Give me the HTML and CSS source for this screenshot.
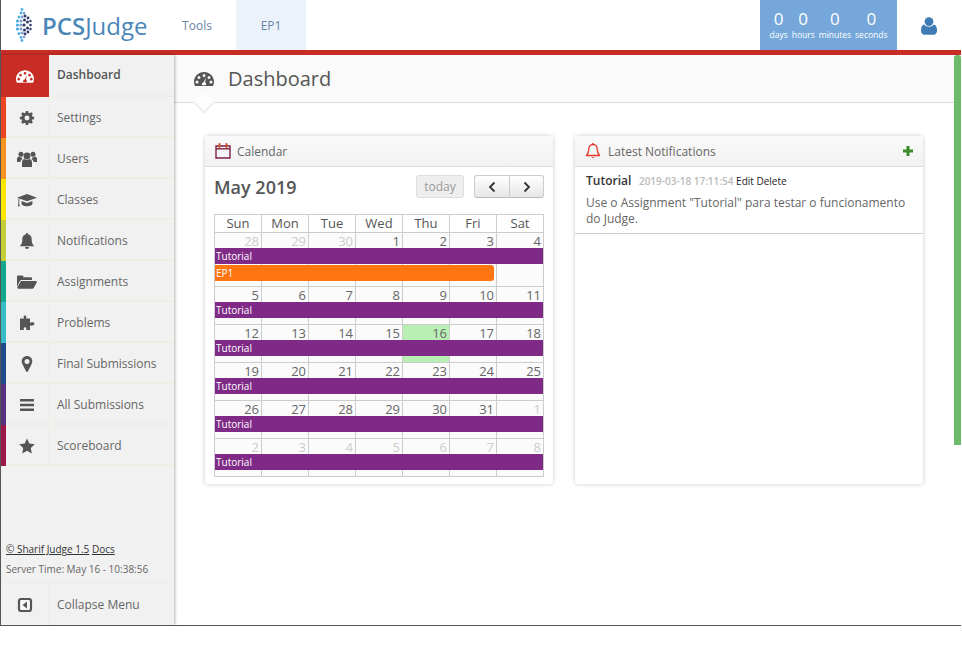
FILE: index.html
```html
<!DOCTYPE html>
<html lang="en">
<head>
  <meta charset="UTF-8" />
  <title>Dashboard - PCSJudge</title>
  <link rel="stylesheet" href="styles.css">
</head>
<body>

<div class="page">

  <!-- Top bar -->
  <header class="topbar">
    <a class="logo" href="#">
      <svg class="logo-mark" viewBox="0 0 16 34" width="16" height="34">
        <g fill="#4fb0e6">
          <circle cx="6" cy="1.500" r="1.400"/><circle cx="5" cy="5" r="1.400"/><circle cx="3" cy="9" r="1.500"/><circle cx="1.500" cy="13" r="1.600"/><circle cx="1.500" cy="17" r="1.600"/><circle cx="1.500" cy="21" r="1.600"/><circle cx="3" cy="25.500" r="1.500"/><circle cx="5" cy="29.500" r="1.400"/><circle cx="6" cy="32.500" r="1.400"/>
        </g>
        <g fill="#7a9fd0">
          <circle cx="8" cy="5" r="1.300"/><circle cx="6.200" cy="9" r="1.400"/><circle cx="5" cy="13" r="1.500"/><circle cx="4.800" cy="17" r="1.500"/><circle cx="5" cy="21" r="1.500"/><circle cx="6.200" cy="25" r="1.400"/><circle cx="8" cy="29" r="1.300"/>
        </g>
        <g fill="#2f3a68">
          <circle cx="9" cy="8" r="1.400"/><circle cx="8.500" cy="12" r="1.500"/><circle cx="8" cy="17" r="1.600"/><circle cx="8.500" cy="22" r="1.500"/><circle cx="9" cy="26" r="1.400"/>
          <circle cx="12" cy="10" r="1.400"/><circle cx="11.500" cy="14" r="1.500"/><circle cx="11.500" cy="20" r="1.500"/><circle cx="12" cy="24" r="1.400"/>
          <circle cx="14.500" cy="13" r="1.200"/><circle cx="14.500" cy="17" r="1.300"/><circle cx="14.500" cy="21" r="1.200"/>
        </g>
      </svg>
      <span class="logo-text"><b>PCS</b>Judge</span>
    </a>
    <nav class="topnav">
      <a href="#">Tools</a>
      <a class="active" href="#">EP1</a>
    </nav>
    <div class="countdown">
      <div class="unit"><strong>0</strong><span>days</span></div>
      <div class="unit"><strong>0</strong><span>hours</span></div>
      <div class="unit"><strong>0</strong><span>minutes</span></div>
      <div class="unit"><strong>0</strong><span>seconds</span></div>
    </div>
    <a class="user" href="#">
      <svg viewBox="0 0 16 18" width="16" height="18"><circle cx="8" cy="4.600" r="4.400" fill="#3f7cb5"/><path d="M3.200 7.600C4.400 9 6 9.800 8 9.800s3.600-.8 4.800-2.200C14.800 8 16 10 16 13.500c0 2.500-1.500 4.200-3.500 4.200H3.500C1.500 17.700 0 16 0 13.500 0 10 1.200 8 3.200 7.600z" fill="#3f7cb5"/></svg>
    </a>
  </header>

  <div class="layout">

    <!-- Sidebar -->
    <aside class="sidebar">
      <ul class="menu">
        <li class="item current">
          <span class="ico"><svg viewBox="0 0 20 16"><use href="#i-gauge"/></svg></span>
          <a href="#">Dashboard</a>
        </li>
        <li class="item c-red">
          <span class="ico"><svg viewBox="-1 -1 18 18"><use href="#i-cog"/></svg></span>
          <a href="#">Settings</a>
        </li>
        <li class="item c-orange">
          <span class="ico wide"><svg viewBox="0 0 20 16"><use href="#i-users"/></svg></span>
          <a href="#">Users</a>
        </li>
        <li class="item c-yellow">
          <span class="ico wide"><svg viewBox="0 0 22 16"><use href="#i-cap"/></svg></span>
          <a href="#">Classes</a>
        </li>
        <li class="item c-lime">
          <span class="ico"><svg viewBox="0 0 16 16"><use href="#i-bell"/></svg></span>
          <a href="#">Notifications</a>
        </li>
        <li class="item c-teal">
          <span class="ico wide"><svg viewBox="0 0 20 16"><use href="#i-folder"/></svg></span>
          <a href="#">Assignments</a>
        </li>
        <li class="item c-cyan">
          <span class="ico"><svg viewBox="0 0 16 16"><use href="#i-puzzle"/></svg></span>
          <a href="#">Problems</a>
        </li>
        <li class="item c-blue">
          <span class="ico"><svg viewBox="0 0 16 16"><use href="#i-pin"/></svg></span>
          <a href="#">Final Submissions</a>
        </li>
        <li class="item c-purple">
          <span class="ico"><svg viewBox="0 0 16 16"><use href="#i-bars"/></svg></span>
          <a href="#">All Submissions</a>
        </li>
        <li class="item c-wine">
          <span class="ico"><svg viewBox="0 0 16 16"><use href="#i-star"/></svg></span>
          <a href="#">Scoreboard</a>
        </li>
      </ul>

      <div class="side-foot">
        <p class="credits"><a href="#">© Sharif Judge 1.5</a> <a href="#">Docs</a></p>
        <p class="time">Server Time: May 16 - 10:38:56</p>
      </div>

      <div class="item collapse">
        <span class="ico"><svg viewBox="0 0 16 16"><rect x="2" y="2" width="12" height="12" rx="2" fill="#f8f8f8" stroke="#555" stroke-width="2.200"/><path d="M10 4.500v7L5.500 8z" fill="#555"/></svg></span>
        <a href="#">Collapse Menu</a>
      </div>
    </aside>

    <!-- Main -->
    <main class="main">
      <div class="page-head">
        <svg class="head-ico" viewBox="0 0 20 16"><use href="#i-gauge"/></svg>
        <h1>Dashboard</h1>
      </div>

      <div class="cards">

        <section class="card">
          <div class="card-head">
            <svg class="card-ico" viewBox="0 0 16 16"><path d="M1 3h14v12H1z" fill="none" stroke="#7d2148" stroke-width="1.400"/><path d="M1 5.800h14" stroke="#7d2148" stroke-width="1.400"/><path d="M4.500 1v3M11.500 1v3" stroke="#c8502a" stroke-width="2" stroke-linecap="round"/></svg>
            <span>Calendar</span>
          </div>
          <div class="cal">
            <div class="cal-bar">
              <h2>May 2019</h2>
              <button class="btn today">today</button>
              <div class="btn-group">
                <button class="btn"><svg viewBox="0 0 8 12" width="8" height="12"><path d="M6.500 1.500 2 6l4.500 4.500" fill="none" stroke="#333" stroke-width="1.800"/></svg></button>
                <button class="btn"><svg viewBox="0 0 8 12" width="8" height="12"><path d="M1.500 1.500 6 6l-4.500 4.500" fill="none" stroke="#333" stroke-width="1.800"/></svg></button>
              </div>
            </div>

            <div class="grid">
              <div class="dow"><span>Sun</span><span>Mon</span><span>Tue</span><span>Wed</span><span>Thu</span><span>Fri</span><span>Sat</span></div>

              <div class="week tall">
                <span class="day off">28</span><span class="day off">29</span><span class="day off">30</span><span class="day">1</span><span class="day">2</span><span class="day">3</span><span class="day">4</span>
                <a class="event ev-tutorial" href="#">Tutorial</a>
                <a class="event ev-ep" href="#">EP1</a>
              </div>
              <div class="week">
                <span class="day">5</span><span class="day">6</span><span class="day">7</span><span class="day">8</span><span class="day">9</span><span class="day">10</span><span class="day">11</span>
                <a class="event ev-tutorial" href="#">Tutorial</a>
              </div>
              <div class="week">
                <span class="day">12</span><span class="day">13</span><span class="day">14</span><span class="day">15</span><span class="day today-cell">16</span><span class="day">17</span><span class="day">18</span>
                <a class="event ev-tutorial" href="#">Tutorial</a>
              </div>
              <div class="week">
                <span class="day">19</span><span class="day">20</span><span class="day">21</span><span class="day">22</span><span class="day">23</span><span class="day">24</span><span class="day">25</span>
                <a class="event ev-tutorial" href="#">Tutorial</a>
              </div>
              <div class="week">
                <span class="day">26</span><span class="day">27</span><span class="day">28</span><span class="day">29</span><span class="day">30</span><span class="day">31</span><span class="day off">1</span>
                <a class="event ev-tutorial" href="#">Tutorial</a>
              </div>
              <div class="week">
                <span class="day off">2</span><span class="day off">3</span><span class="day off">4</span><span class="day off">5</span><span class="day off">6</span><span class="day off">7</span><span class="day off">8</span>
                <a class="event ev-tutorial" href="#">Tutorial</a>
              </div>
            </div>
          </div>
        </section>

        <section class="card">
          <div class="card-head">
            <svg class="card-ico bell" viewBox="0 0 16 16"><path d="M8 1.500c-2.800 0-4.200 2-4.200 4.500 0 4-1.300 5.300-2.300 6.500h13c-1-1.200-2.300-2.500-2.300-6.500 0-2.500-1.400-4.500-4.200-4.500z" fill="none" stroke="#e8392c" stroke-width="1.300" stroke-linejoin="round"/><path d="M6.500 14.200a1.600 1.600 0 0 0 3 0z" fill="#e8392c"/><circle cx="8" cy="1" r="1" fill="#e8392c"/></svg>
            <span>Latest Notifications</span>
            <a class="add" href="#"><svg viewBox="0 0 10 10" width="10" height="10"><path d="M3.500 0h3v3.500H10v3H6.500V10h-3V6.500H0v-3h3.500z" fill="#3d8b2c"/></svg></a>
          </div>
          <div class="notif">
            <div class="notif-title"><b>Tutorial</b> <time>2019-03-18 17:11:54</time> <a href="#">Edit</a> <a href="#">Delete</a></div>
            <p>Use o Assignment "Tutorial" para testar o funcionamento do Judge.</p>
          </div>
        </section>

      </div>
      <div class="scroll-thumb"></div>
    </main>
  </div>
</div>

<!-- Icon shapes -->
<svg class="defs" width="0" height="0">
  <defs>
    <path id="i-gauge" fill-rule="evenodd" d="M10 1C4.500 1 0 5.300 0 10.800c0 1.500.3 2.900 1 4.200h18c.7-1.300 1-2.700 1-4.200C20 5.300 15.500 1 10 1zM10 3a1.500 1.500 0 1 1 0 3 1.500 1.500 0 0 1 0-3zM5 5a1.500 1.500 0 1 1 0 3 1.500 1.500 0 0 1 0-3zM15 5a1.500 1.500 0 1 1 0 3 1.500 1.500 0 0 1 0-3zM3 9.500a1.500 1.500 0 1 1 0 3 1.500 1.500 0 0 1 0-3zM17 9.500a1.500 1.500 0 1 1 0 3 1.500 1.500 0 0 1 0-3zM11.800 6.500l-.6 5.100c.6.400.9 1 .9 1.700 0 .4-.1.700-.3 1H8.200c-.2-.3-.3-.6-.3-1 0-1 .8-1.900 1.800-2z"/>
    <path id="i-cog" fill-rule="evenodd" d="M6.700 0h2.600l.4 2.100 1.200.5L12.700 1.400l1.900 1.900-1.200 1.800.5 1.200 2.100.4v2.600l-2.100.4-.5 1.200 1.200 1.800-1.900 1.900-1.800-1.200-1.200.5-.4 2.100H6.700l-.4-2.100-1.200-.5-1.800 1.200-1.900-1.900 1.200-1.800-.5-1.200L0 9.300V6.700l2.100-.4.500-1.200L1.400 3.300l1.900-1.900 1.800 1.200 1.200-.5zM8 5.200a2.800 2.800 0 1 0 0 5.600 2.800 2.800 0 0 0 0-5.600z"/>
    <g id="i-users">
      <circle cx="10" cy="5" r="3.400"/><circle cx="4" cy="3.200" r="2.500"/><circle cx="16" cy="3.200" r="2.500"/>
      <path d="M5 16V11.500C5 9 6.500 8 7.500 8c.7.600 1.500 1 2.500 1s1.800-.4 2.500-1c1 0 2.500 1 2.500 3.500V16z"/>
      <path d="M0 11V8c0-1.500 1-2.500 2-2.500.5.400 1.200.7 2 .7h.4c.2.800.6 1.300 1 1.700C4 8.700 3.400 9.800 3.400 11zM20 11V8c0-1.500-1-2.500-2-2.500-.5.400-1.200.7-2 .7h-.4c-.2.800-.6 1.300-1 1.700 1.400.8 2 1.900 2 3.100z"/>
    </g>
    <g id="i-cap">
      <path d="M11 1.500 22 5.500 11 9.500 0 5.500z"/>
      <path d="M5 9.200v3c0 1.500 3 2.800 6 2.800s6-1.300 6-2.800v-3l-6 2.200z"/>
      <path d="M1.500 6.500h1v5.500l.6 3H.9l.6-3z"/>
    </g>
    <g id="i-bell">
      <path d="M8 1.200c-3.200 0-4.700 2.200-4.700 5 0 4.200-1.300 5.600-2.600 7h14.600c-1.300-1.400-2.600-2.800-2.600-7 0-2.800-1.500-5-4.700-5z"/>
      <circle cx="8" cy="1.100" r="1.100"/><path d="M6 14h4a2 2 0 0 1-4 0z"/>
    </g>
    <g id="i-folder">
      <path d="M0 13V2.800C0 2 .6 1.500 1.200 1.500h4c.7 0 1.200.5 1.200 1.200v.5h7.400c.7 0 1.200.5 1.200 1.200V6H5c-1.200 0-2 .6-2.500 1.500z"/>
      <path d="M4.500 7h14.300c.9 0 1.300.8.900 1.500l-3 5.500c-.3.500-.8.800-1.300.8H1.300c-.9 0-1.300-.8-.9-1.500l2.800-5.100C3.500 7.300 4 7 4.500 7z"/>
    </g>
    <path id="i-puzzle" d="M1 3.500h3.500c.6 0 .6-.5.300-1-.4-.5-.4-2 1.200-2s1.600 1.500 1.200 2c-.3.500-.3 1 .3 1H11v3.700c0 .6.500.6 1 .3.500-.4 3.500-.4 3.500 1.300S12.500 11 12 10.600c-.5-.3-1-.3-1 .3V15H7.500c-.6 0-.6-.5-.3-1 .4-.5.400-1.800-1.200-1.800s-1.600 1.300-1.200 1.800c.3.500.3 1-.3 1H1z"/>
    <path id="i-pin" fill-rule="evenodd" d="M8 0c3 0 5.300 2.300 5.300 5.300 0 1.200-.3 1.900-.8 3L9 15.200c-.2.500-.6.800-1 .8s-.8-.3-1-.8L3.500 8.300c-.5-1.100-.8-1.800-.8-3C2.700 2.300 5 0 8 0zm0 2.900a2.500 2.500 0 1 0 0 5 2.500 2.500 0 0 0 0-5z"/>
    <path id="i-bars" d="M1 2h14v2.600H1zM1 6.700h14v2.600H1zM1 11.400h14V14H1z"/>
    <path id="i-star" d="M8 .5l2.300 5 5.500.7-4 3.800 1 5.500L8 12.800l-4.800 2.700 1-5.500-4-3.800 5.500-.7z"/>
  </defs>
</svg>

</body>
</html>
```
FILE: styles.css
```css
* {
  box-sizing: border-box;
}

html, body {
  margin: 0;
  background: #fff;
}

body {
  font-family: "Open Sans", sans-serif;
  font-size: 12px;
  color: #555;
}

a {
  color: inherit;
  text-decoration: none;
}

.defs {
  display: block;
}

.page {
  width: 961px;
  height: 626px;
  border-left: 1px solid #555;
  border-bottom: 1px solid #555;
  overflow: hidden;
}

/* Top bar */
.topbar {
  display: flex;
  height: 50px;
  background: #fff;
}

.logo {
  display: flex;
  align-items: center;
  width: 157px;
  padding-left: 15px;
}

.logo-text {
  margin-left: 10px;
  font-size: 24px;
  color: #4a86b8;
}

.logo-text b {
  font-weight: 600;
}

.topnav {
  display: flex;
}

.topnav a {
  display: flex;
  align-items: center;
  justify-content: center;
  width: 78px;
  font-size: 12px;
  color: #6a84a6;
}

.topnav .active {
  width: 70px;
  background: #ecf2fa;
}

.countdown {
  display: flex;
  justify-content: center;
  gap: 4px;
  width: 137px;
  height: 50px;
  margin-left: auto;
  padding-top: 9px;
  background: #76a7da;
  color: #fff;
}

.unit {
  display: flex;
  flex-direction: column;
  align-items: center;
}

.unit strong {
  font-size: 17px;
  font-weight: 400;
  line-height: 20px;
}

.unit span {
  font-size: 8.5px;
  line-height: 12px;
}

.user {
  display: flex;
  align-items: center;
  justify-content: center;
  width: 64px;
  padding-top: 2px;
}

/* Layout */
.layout {
  display: flex;
  height: 575px;
  border-top: 5px solid #c72c25;
}

.sidebar {
  display: flex;
  flex-direction: column;
  flex: none;
  width: 173px;
  background: #f1f1f1;
  box-shadow: 1px 0 3px rgba(0,0,0,0.3);
  position: relative;
  z-index: 1;
}

.menu {
  list-style: none;
  margin: 0;
  padding: 0;
}

.item {
  display: flex;
  height: 41px;
  border-left: 5px solid transparent;
  box-shadow: inset 0 -2px 0 #eeeee4;
  font-size: 12px;
  color: #666;
}

.item a {
  align-self: center;
  padding-left: 8px;
}

.ico {
  display: flex;
  align-items: center;
  justify-content: center;
  flex: none;
  width: 43px;
  border-right: 1px solid #eeeee4;
}

.ico svg {
  width: 16px;
  height: 16px;
  fill: #555;
}

.ico.wide svg {
  width: 20px;
  height: 16px;
}

.current {
  height: 42px;
  border-left-width: 0;
}

.current .ico {
  width: 48px;
  background: #c72c25;
  border-right: 0;
}

.current .ico svg {
  width: 18px;
  height: 15px;
  fill: #fff;
}

.current a {
  padding-bottom: 4px;
  font-weight: 600;
  color: #555;
}

.c-red    { border-left-color: #ee4423; }
.c-orange { border-left-color: #f7931e; }
.c-yellow { border-left-color: #ffe600; }
.c-lime   { border-left-color: #c4cf35; }
.c-teal   { border-left-color: #12a88e; }
.c-cyan   { border-left-color: #35bcc6; }
.c-blue   { border-left-color: #1f4a8c; }
.c-purple { border-left-color: #55337f; }
.c-wine   { border-left-color: #9c1648; }

.side-foot {
  margin-top: auto;
  padding: 0 5px 4px;
  font-size: 10px;
}

.side-foot p {
  margin: 0;
  line-height: 20px;
}

.credits a {
  color: #333;
  text-decoration: underline;
}

.time {
  color: #666;
}

.collapse {
  height: 42px;
  border-left-width: 0;
  box-shadow: none;
  border-top: 1px solid #eeeee4;
}

.collapse .ico {
  width: 48px;
}

/* Main */
.main {
  flex: 1;
  position: relative;
  background: #fff;
}

.page-head {
  display: flex;
  align-items: center;
  height: 48px;
  padding-left: 20px;
  background: #fafafa;
  border-bottom: 1px solid #dcdcd0;
  position: relative;
}

.page-head::after {
  content: "";
  position: absolute;
  left: 22px;
  bottom: -8px;
  width: 15px;
  height: 15px;
  background: #fdfdfd;
  border-right: 1px solid #e4e4da;
  border-bottom: 1px solid #e4e4da;
  transform: rotate(45deg);
}

.head-ico {
  width: 20px;
  height: 16px;
  fill: #555;
}

.page-head h1 {
  margin: 0 0 0 14px;
  font-size: 20px;
  font-weight: 400;
  color: #555;
}

.cards {
  display: flex;
  gap: 22px;
  padding: 33px 0 0 31px;
}

.card {
  width: 348px;
  height: 348px;
  background: #fff;
  border-radius: 3px;
  box-shadow: 0 0 4px rgba(0,0,0,0.22);
}

.card-head {
  display: flex;
  align-items: center;
  height: 31px;
  padding-left: 10px;
  background: linear-gradient(#fafafa, #f2f2f2);
  border-bottom: 1px solid #ddd;
  font-size: 12px;
  color: #666;
}

.card-ico {
  width: 16px;
  height: 16px;
  margin-right: 6px;
}

.card-ico.bell {
  margin-right: 7px;
}

.add {
  display: flex;
  margin-left: auto;
  margin-right: 10px;
}

/* Calendar */
.cal {
  padding: 0 9px;
}

.cal-bar {
  display: flex;
  align-items: flex-start;
  height: 47px;
  padding-top: 8px;
}

.cal-bar h2 {
  margin: 0 auto 0 0;
  font-size: 18px;
  line-height: 25px;
  font-weight: 600;
  color: #555;
}

.btn {
  display: flex;
  align-items: center;
  justify-content: center;
  height: 23px;
  padding: 0;
  border: 1px solid #ccc;
  border-bottom-color: #bbb;
  background: linear-gradient(#fff, #e6e6e6);
  border-radius: 3px;
  font-family: inherit;
  font-size: 12px;
  color: #333;
}

.today {
  width: 48px;
  margin-right: 10px;
  background: #eee;
  border-color: #ddd;
  color: #999;
}

.btn-group {
  display: flex;
}

.btn-group .btn {
  width: 35px;
}

.btn-group .btn:first-child {
  border-radius: 3px 0 0 3px;
  border-right: 0;
}

.btn-group .btn:last-child {
  border-radius: 0 3px 3px 0;
}

.grid {
  width: 330px;
  border: 1px solid #ccc;
  border-width: 1px 0 0 1px;
}

.dow,
.week {
  display: grid;
  grid-template-columns: repeat(7, 47px);
}

.dow span {
  height: 18px;
  border-right: 1px solid #ccc;
  border-bottom: 1px solid #ccc;
  text-align: center;
  font-size: 13px;
  line-height: 17px;
  color: #555;
}

.week {
  grid-template-rows: 15px 16px 7px;
  height: 38px;
}

.week.tall {
  grid-template-rows: 15px 16px 1px 16px 6px;
  height: 54px;
}

.day {
  grid-row: 1 / -1;
  padding-right: 2px;
  background: #fbfbfb;
  border-right: 1px solid #ccc;
  border-bottom: 1px solid #ccc;
  text-align: right;
  font-size: 13px;
  line-height: 16px;
  color: #666;
}

.day:nth-child(1) { grid-column: 1; }
.day:nth-child(2) { grid-column: 2; }
.day:nth-child(3) { grid-column: 3; }
.day:nth-child(4) { grid-column: 4; }
.day:nth-child(5) { grid-column: 5; }
.day:nth-child(6) { grid-column: 6; }
.day:nth-child(7) { grid-column: 7; }

.day.off {
  color: #ccc;
}

.day.today-cell {
  background: #b9efb5;
}

.event {
  grid-row: 2;
  padding-left: 1px;
  font-size: 10px;
  line-height: 16px;
  color: #fff;
  z-index: 1;
}

.ev-tutorial {
  grid-column: 1 / -1;
  background: #802a87;
  margin-right: 1px;
}

.ev-ep {
  grid-row: 4;
  grid-column: 1 / 7;
  background: #ff750f;
  margin-right: 3px;
  border-radius: 0 3px 3px 0;
}

/* Notifications */
.notif {
  padding: 6px 11px 6px;
  border-bottom: 1px solid #ccc;
}

.notif-title {
  font-size: 10px;
  line-height: 16px;
  color: #222;
}

.notif-title b {
  margin-right: 5px;
  font-size: 12px;
  font-weight: 600;
  color: #333;
}

.notif-title time {
  font-weight: 600;
  color: #bbb;
}

.notif p {
  margin: 6px 0 0;
  font-size: 12px;
  line-height: 16px;
  color: #666;
}

.scroll-thumb {
  position: absolute;
  top: 0;
  right: 0;
  width: 7px;
  height: 390px;
  background: #6cbb6a;
  border-radius: 3px 3px 0 0;
}
```
